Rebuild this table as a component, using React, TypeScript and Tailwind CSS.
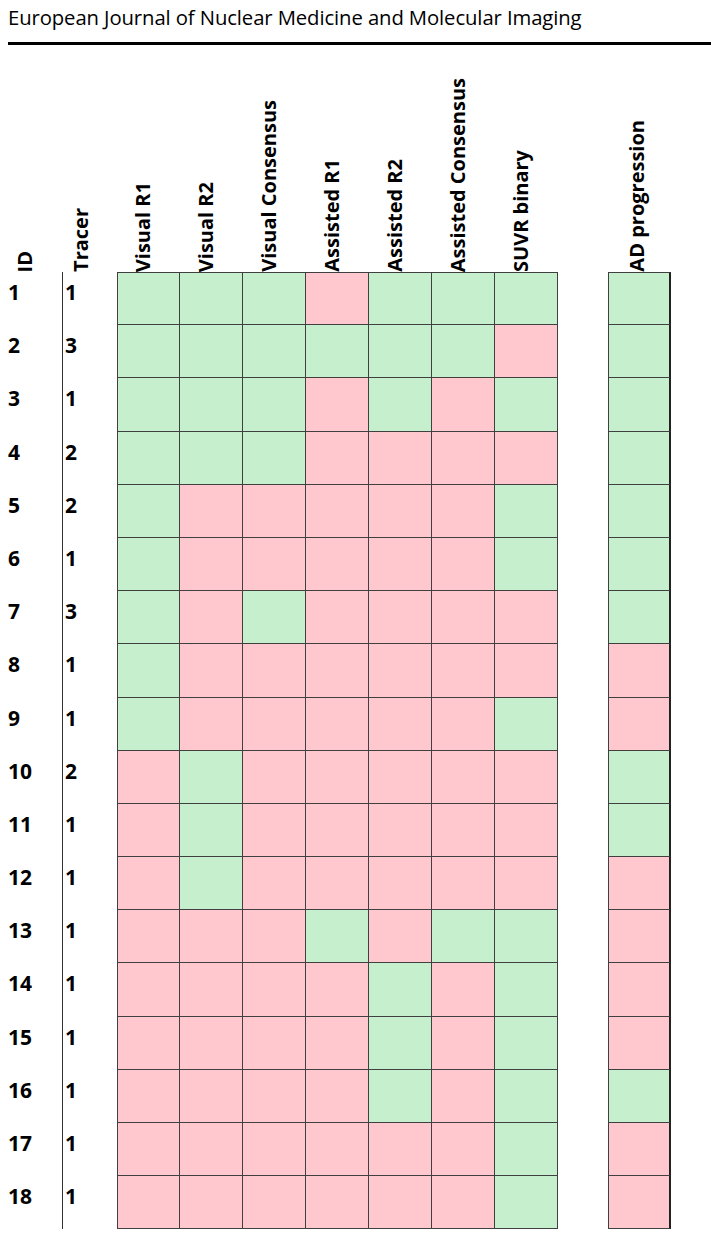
const columns = [
  "Visual R1",
  "Visual R2",
  "Visual Consensus",
  "Assisted R1",
  "Assisted R2",
  "Assisted Consensus",
  "SUVR binary",
];

// G = green (positive/agree), P = pink; last char is AD progression
const rows: { id: number; tracer: number; cells: string }[] = [
  { id: 1, tracer: 1, cells: "GGGPGGGG" },
  { id: 2, tracer: 3, cells: "GGGGGGPG" },
  { id: 3, tracer: 1, cells: "GGGPGPGG" },
  { id: 4, tracer: 2, cells: "GGGPPPPG" },
  { id: 5, tracer: 2, cells: "GPPPPPGG" },
  { id: 6, tracer: 1, cells: "GPPPPPGG" },
  { id: 7, tracer: 3, cells: "GPGPPPPG" },
  { id: 8, tracer: 1, cells: "GPPPPPPP" },
  { id: 9, tracer: 1, cells: "GPPPPPGP" },
  { id: 10, tracer: 2, cells: "PGPPPPPG" },
  { id: 11, tracer: 1, cells: "PGPPPPPG" },
  { id: 12, tracer: 1, cells: "PGPPPPPP" },
  { id: 13, tracer: 1, cells: "PPPGPGGP" },
  { id: 14, tracer: 1, cells: "PPPPGPGP" },
  { id: 15, tracer: 1, cells: "PPPPGPGP" },
  { id: 16, tracer: 1, cells: "PPPPGPGG" },
  { id: 17, tracer: 1, cells: "PPPPPPGP" },
  { id: 18, tracer: 1, cells: "PPPPPPGP" },
];

function VerticalLabel({ text }: { text: string }) {
  return (
    <span className="[writing-mode:vertical-rl] rotate-180 whitespace-nowrap leading-[20px]">
      {text}
    </span>
  );
}

function Cell({ v, first, top }: { v: string; first?: boolean; top?: boolean }) {
  return (
    <div
      className={
        "w-[63px] h-full border-r border-b border-[#404040] " +
        (v === "G" ? "bg-[#c6efce]" : "bg-[#ffc7ce]") +
        (first ? " border-l" : "") +
        (top ? " border-t" : "")
      }
    />
  );
}

export default function App() {
  return (
    <div
      className="w-[711px] h-[1239px] bg-white text-black overflow-hidden"
      style={{ fontFamily: '"Open Sans", sans-serif' }}
    >
      <div className="h-[42px] pl-2 pt-[3px] text-[20.3px] leading-[28px] tracking-[-0.1px]">
        European Journal of Nuclear Medicine and Molecular Imaging
      </div>
      <div className="ml-2 h-[3px] bg-black" />

      <div className="font-bold text-[20px]">
        <div className="flex h-[227px] items-end">
          <div className="w-[62px] pl-[15px] flex items-end">
            <VerticalLabel text="ID" />
          </div>
          <div className="w-[55px] pl-[9px] flex items-end">
            <VerticalLabel text="Tracer" />
          </div>
          {columns.map((c) => (
            <div key={c} className="w-[63px] pl-[16px] flex items-end">
              <VerticalLabel text={c} />
            </div>
          ))}
          <div className="w-[50px]" />
          <div className="w-[63px] pl-[19px] flex items-end">
            <VerticalLabel text="AD progression" />
          </div>
        </div>

        {rows.map((r, i) => (
          <div key={r.id} className="flex h-[53.2px] text-[21px]">
            <div className="w-[62px] pl-2 pt-[8px] leading-[24px]">{r.id}</div>
            <div className="w-[55px] border-l border-[#333] pl-[2px] pt-[8px] leading-[24px]">
              {r.tracer}
            </div>
            {r.cells
              .slice(0, 7)
              .split("")
              .map((v, j) => (
                <Cell key={j} v={v} first={j === 0} top={i === 0} />
              ))}
            <div className="w-[50px]" />
            <div
              className={
                "w-[63px] h-full border-l border-r-2 border-b border-[#404040] border-r-[#222] " +
                (r.cells[7] === "G" ? "bg-[#c6efce]" : "bg-[#ffc7ce]") +
                (i === 0 ? " border-t" : "")
              }
            />
          </div>
        ))}
      </div>
    </div>
  );
}
